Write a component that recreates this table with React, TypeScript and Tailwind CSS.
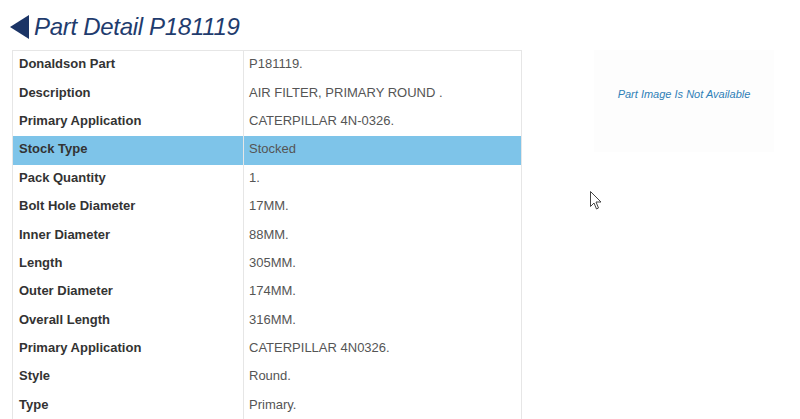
import React from "react";

const rows: [string, string][] = [
  ["Donaldson Part", "P181119."],
  ["Description", "AIR FILTER, PRIMARY ROUND ."],
  ["Primary Application", "CATERPILLAR 4N-0326."],
  ["Stock Type", "Stocked"],
  ["Pack Quantity", "1."],
  ["Bolt Hole Diameter", "17MM."],
  ["Inner Diameter", "88MM."],
  ["Length", "305MM."],
  ["Outer Diameter", "174MM."],
  ["Overall Length", "316MM."],
  ["Primary Application", "CATERPILLAR 4N0326."],
  ["Style", "Round."],
  ["Type", "Primary."],
];

export default function App() {
  return (
    <div
      className="relative w-[800px] h-[419px] overflow-hidden bg-white"
      style={{ fontFamily: '"Liberation Sans", Arial, sans-serif' }}
    >
      <div className="flex items-start pl-[10px] pt-[14px] h-[50px]">
        <svg width="19" height="24" viewBox="0 0 19 24" className="mt-[1px]">
          <polygon points="19,0 19,24 0,12" fill="#1b3466" />
        </svg>
        <h1 className="ml-[5px] text-[24px] leading-[26px] italic text-[#1f3c6e] tracking-[-0.3px]">
          Part Detail P181119
        </h1>
      </div>
      <div className="flex">
        <div className="ml-[12px] w-[510px] border border-[#e6e6e6] border-b-0 text-[13px] leading-[16px] h-[369px]">
          {rows.map(([k, v], i) => (
            <div
              key={i}
              className={`flex h-[28.4px] ${i === 3 ? "bg-[#7ec4e9]" : ""}`}
            >
              <div className="w-[231px] pl-[6px] pb-[2px] font-bold text-[#333333] border-r border-[#e6e6e6] h-full flex items-center">
                {k}
              </div>
              <div className="pl-[5px] pb-[2px] text-[#555555] h-full flex items-center">{v}</div>
            </div>
          ))}
        </div>
        <div className="ml-[72px] w-[180px] h-[102px] pb-[14px] bg-[#fdfdfd] flex items-center justify-center">
          <span className="italic text-[11px] text-[#2f7fb7]">Part Image Is Not Available</span>
        </div>
      </div>
      <svg
        className="absolute left-[590px] top-[191px]"
        width="12"
        height="20"
        viewBox="0 0 12 20"
      >
        <path
          d="M0.5 0.5 L0.5 15.5 L4 12 L6.5 18 L8.5 17 L6 11 L11 11 Z"
          fill="#ffffff"
          stroke="#444"
          strokeWidth="1"
        />
      </svg>
    </div>
  );
}
